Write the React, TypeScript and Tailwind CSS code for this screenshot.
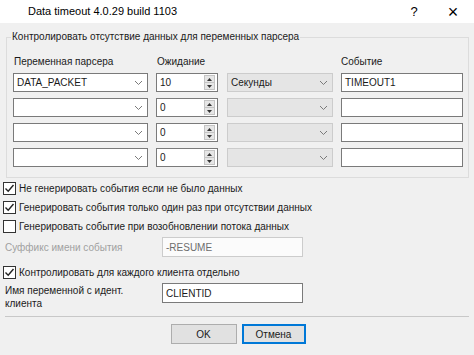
import React from "react";

const font = { fontFamily: '"Liberation Sans", Arial, sans-serif' };

const Chevron = () => (
  <svg width="9" height="6" viewBox="0 0 9 6" className="shrink-0">
    <path d="M1 1 L4.5 4.5 L8 1" fill="none" stroke="#7a7a7a" strokeWidth="1" />
  </svg>
);

const Check = ({ checked }: { checked: boolean }) => (
  <div className="w-[13px] h-[13px] border border-[#333333] bg-white shrink-0 flex items-center justify-center">
    {checked && (
      <svg width="11" height="11" viewBox="0 0 11 11">
        <path d="M1.5 5.5 L4.2 8.2 L9.5 2" fill="none" stroke="#222222" strokeWidth="1.4" />
      </svg>
    )}
  </div>
);

const Spin = () => (
  <div className="flex flex-col w-[11px] h-[15px] bg-[#e6e6e6] border border-[#c4c4c4]">
    <div className="flex-1 flex items-center justify-center border-b border-[#c4c4c4]">
      <svg width="5" height="3" viewBox="0 0 5 3">
        <path d="M0 3 L2.5 0 L5 3 Z" fill="#333333" />
      </svg>
    </div>
    <div className="flex-1 flex items-center justify-center">
      <svg width="5" height="3" viewBox="0 0 5 3">
        <path d="M0 0 L2.5 3 L5 0 Z" fill="#333333" />
      </svg>
    </div>
  </div>
);

const rows = [
  { name: "DATA_PACKET", wait: "10", unit: "Секунды", event: "TIMEOUT1" },
  { name: "", wait: "0", unit: "", event: "" },
  { name: "", wait: "0", unit: "", event: "" },
  { name: "", wait: "0", unit: "", event: "" },
];

const CheckRow = ({ checked, label }: { checked: boolean; label: string }) => (
  <div className="h-[19px] flex items-center gap-[3px] pl-[3px]">
    <Check checked={checked} />
    <span>{label}</span>
  </div>
);

export default function App() {
  return (
    <div
      className="w-[474px] h-[355px] bg-[#f0f0f0] overflow-hidden text-[10px] text-[#1a1a1a] flex flex-col"
      style={font}
    >
      {/* title bar */}
      <div className="h-[23px] bg-white flex items-center shrink-0 text-[11px] text-black">
        <span className="pl-[28px] flex-1">Data timeout 4.0.29 build 1103</span>
        <span className="w-[40px] text-center text-[13px]">?</span>
        <span className="w-[40px] text-center text-[18px] font-light leading-none pr-[2px]">
          ×
        </span>
      </div>

      {/* group box */}
      <fieldset className="ml-[6px] mt-[7px] w-[463px] border border-[#dcdcdc] pl-[6px] pb-[10px]">
        <legend className="ml-[-2px] px-[1px] h-[14px] leading-[14px]">
          Контролировать отсутствие данных для переменных парсера
        </legend>
        <div className="grid grid-cols-[135px_62px_106px_122px] gap-x-[8px] mt-[11px]">
          <div className="h-[14px] leading-[14px] pl-[1px]">Переменная парсера</div>
          <div className="h-[14px] leading-[14px] pl-[1px]">Ожидание</div>
          <div />
          <div className="h-[14px] leading-[14px] pl-[1px]">Событие</div>
        </div>
        <div className="flex flex-col gap-[6px] mt-[4px]">
          {rows.map((r, i) => (
            <div key={i} className="flex h-[19px]">
              <div className="w-[135px] border border-[#7a7a7a] bg-white flex items-center pl-[3px] pr-[4px]">
                <span className="flex-1">{r.name}</span>
                <Chevron />
              </div>
              <div className="ml-[8px] w-[62px] border border-[#7a7a7a] bg-white flex items-center pl-[3px] pr-[2px]">
                <span className="flex-1">{r.wait}</span>
                <Spin />
              </div>
              <div className="ml-[9px] w-[106px] border border-[#cccccc] bg-[#e5e5e5] flex items-center pl-[3px] pr-[4px]">
                <span className="flex-1">{r.unit}</span>
                <Chevron />
              </div>
              <div className="ml-[8px] w-[122px] border border-[#7a7a7a] bg-white flex items-center pl-[3px]">
                {r.event}
              </div>
            </div>
          ))}
        </div>
      </fieldset>

      {/* options */}
      <div className="mt-[1px]">
        <CheckRow checked label="Не генерировать события если не было данных" />
        <CheckRow checked label="Генерировать события только один раз при отсутствии данных" />
        <CheckRow checked={false} label="Генерировать событие при возобновлении потока данных" />
      </div>

      <div className="mt-[1px] h-[20px] flex items-center">
        <span className="w-[162px] pl-[5px] text-[#a0a0a0]">Суффикс имени события</span>
        <div className="w-[141px] h-[20px] border border-[#cccccc] bg-[#fbfbfb] flex items-center pl-[3px] text-[#6d6d6d]">
          -RESUME
        </div>
      </div>

      <div className="mt-[6px]">
        <CheckRow checked label="Контролировать для каждого клиента отдельно" />
      </div>

      <div className="mt-[1px] flex items-start">
        <div className="w-[162px] pl-[5px] leading-[13px] pt-[1px]">
          Имя переменной с идент.
          <br />
          клиента
        </div>
        <div className="w-[141px] h-[20px] border border-[#7a7a7a] bg-white flex items-center pl-[3px]">
          CLIENTID
        </div>
      </div>

      {/* separator */}
      <div className="mt-[6px] mx-[5px] h-[1px] bg-[#c8c8c8]" />

      {/* buttons */}
      <div className="mt-[7px] flex justify-center gap-[5px] pl-[2px]">
        <button className="w-[66px] h-[20px] border border-[#adadad] bg-[#e1e1e1]">
          OK
        </button>
        <button className="w-[64px] h-[20px] border-2 border-[#0078d7] bg-[#e1e1e1]">
          Отмена
        </button>
      </div>
    </div>
  );
}
